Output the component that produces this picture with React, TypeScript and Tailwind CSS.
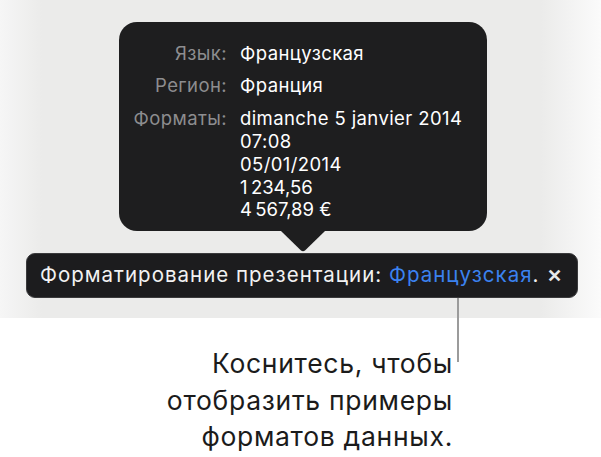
import React from 'react';

const rows = [
  { label: 'Язык:', values: ['Французская'] },
  { label: 'Регион:', values: ['Франция'] },
  { label: 'Форматы:', values: ['dimanche 5 janvier 2014', '07:08', '05/01/2014', '1\u202F234,56', '4\u202F567,89\u00A0€'] },
];

export default function App() {
  return (
    <div className="relative w-[601px] h-[457px] bg-white overflow-hidden font-['Inter','Noto_Sans',sans-serif]">
      {/* grey app area */}
      <div className="h-[318px] pt-[22px] bg-[linear-gradient(90deg,#f6f6f6_0%,#ebebea_7%,#ebebea_90%,#fbfbfb_100%)]">
        {/* popover */}
        <div className="ml-[119px] w-[368px] h-[209px] rounded-[18px] bg-[#1e1e1f] pt-[20px]">
          {rows.map((row, i) => (
            <div key={row.label} className={`flex ${i === 1 ? 'mt-[9px]' : i === 2 ? 'mt-[11px]' : ''}`}>
              <div className="w-[108px] text-right text-[18.5px] leading-[22.7px] tracking-[0.4px] text-[#8d8d8f]">{row.label}</div>
              <div className="ml-[13px] text-[18.5px] leading-[22.7px] tracking-[0.4px] text-white">
                {row.values.map(v => (
                  <div key={v}>{v}</div>
                ))}
              </div>
            </div>
          ))}
        </div>
        <svg width="44" height="21" viewBox="0 0 44 21" className="block ml-[281px]">
          <path d="M0 0 L44 0 L24 19.5 Q22 21 20 19.5 Z" fill="#1e1e1f" />
        </svg>
        {/* presentation format bar */}
        <div className="mt-[1px] ml-[26px] w-[552px] h-[45px] rounded-[9px] bg-[#1c1c1e] border border-[#3a3a3c] flex items-center pl-[13px] pr-[14px]">
          <span className="text-[20.5px] tracking-[1px] text-[#f2f2f2]">
            Форматирование презентации: <span className="text-[#3b82f0]">Французская</span>.
          </span>
          <span className="ml-auto mr-[1px] text-[18px] font-bold leading-none text-[#e8e8e8]">✕</span>
        </div>
      </div>

      {/* callout line */}
      <div className="absolute left-[457px] top-[298px] w-[2px] h-[64px] bg-[#9b9b9b]" />

      {/* caption */}
      <div className="w-[453px] pt-[27px] text-right text-[26.5px] leading-[36.5px] tracking-[0.7px] text-[#1b1b1b]">
        <div>Коснитесь, чтобы</div>
        <div>отобразить примеры</div>
        <div>форматов данных.</div>
      </div>
    </div>
  );
}
